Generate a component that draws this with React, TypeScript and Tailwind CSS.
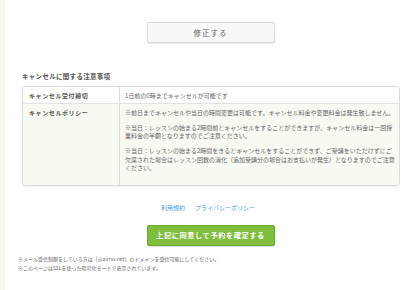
import React from 'react';

const policyLines = [
  ['※前日までキャンセルや当日の時間変更は可能です。キャンセル料金や変更料金は発生致しません。'],
  [
    '※当日：レッスンの始まる2時間前とキャンセルをすることができますが、キャンセル料金は一回授',
    '業料金の半額となりますのでご注意ください。',
  ],
  [
    '※当日：レッスンの始まる2時間をきるとキャンセルをすることができず、ご受講をいただけずにご',
    '欠席された場合はレッスン回数の消化（追加受講分の場合はお支払いが発生）となりますのでご注意',
    'ください。',
  ],
];

const App = () => {
  return (
    <div
      className="flex w-full h-[290px] overflow-hidden"
      style={{ fontFamily: '"Noto Sans CJK JP", "Noto Sans", sans-serif' }}
    >
      <div className="w-[5px] shrink-0 bg-[#f5f9ec]" />
      <div className="flex-1 bg-white flex flex-col">
        {/* Edit button */}
        <div className="flex justify-center pt-[22px]">
          <button className="w-[128px] h-[21px] rounded-[2px] border border-[#dadada] bg-[#f8f8f8] shadow-[0_1px_1px_rgba(0,0,0,0.08)] text-[7.5px] tracking-[1px] text-[#666] leading-none">
            修正する
          </button>
        </div>

        {/* Cancel notes */}
        <div className="ml-[17px] mr-[16px] mt-[29px]">
          <h2 className="text-[6.5px] leading-[9px] font-semibold text-[#555] tracking-[0.3px]">
            キャンセルに関する注意事項
          </h2>
          <div className="mt-[5px] border border-[#dcdcdc] rounded-[3px] overflow-hidden shadow-[0_1px_1px_rgba(0,0,0,0.06)] text-[6px] text-[#666]">
            <div className="flex h-[17px] bg-white border-b border-[#e2e2e2]">
              <div className="w-[97px] shrink-0 border-r border-[#dcdcdc] pl-[6px] flex items-center font-semibold tracking-[0.6px] text-[#555]">
                キャンセル受付締切
              </div>
              <div className="flex-1 pl-[5px] flex items-center">1日前の0時までキャンセルが可能です</div>
            </div>
            <div className="flex h-[81px] bg-[#f7faf1]">
              <div className="w-[97px] shrink-0 border-r border-[#dcdcdc] pl-[6px] pt-[4.5px] font-semibold tracking-[0.6px] text-[#555] leading-[8.5px]">
                キャンセルポリシー
              </div>
              <div className="flex-1 pl-[5px] pt-[4.5px] flex flex-col gap-[6.5px] leading-[8.5px] whitespace-nowrap">
                {policyLines.map((para, i) => (
                  <p key={i}>
                    {para.map((line, j) => (
                      <span key={j} className="block">
                        {line}
                      </span>
                    ))}
                  </p>
                ))}
              </div>
            </div>
          </div>
        </div>

        {/* Links */}
        <div className="flex justify-center gap-[10px] mt-[17px] text-[6px] leading-[9px] text-[#4aa0dc]">
          <a className="ml-[-5px]">利用規約</a>
          <a>プライバシーポリシー</a>
        </div>

        {/* Confirm button */}
        <div className="flex justify-center mt-[13px]">
          <button className="w-[128px] h-[21px] rounded-[2px] border border-[#6aa82f] bg-[#7fbd3e] shadow-[0_1px_1px_rgba(0,0,0,0.12)] text-white font-bold text-[7.2px] tracking-[0.6px] leading-none">
            上記に同意して予約を確定する
          </button>
        </div>

        {/* Footnotes */}
        <div className="ml-[13px] mt-[7.5px] text-[5px] leading-[9px] text-[#666]">
          <p>※メール受信制限をしている方は［@airrsv.net］のドメインを受信可能にしてください。</p>
          <p>※このページはSSLを使った暗号化モードで表示されています。</p>
        </div>
      </div>
    </div>
  );
};

export default App;
